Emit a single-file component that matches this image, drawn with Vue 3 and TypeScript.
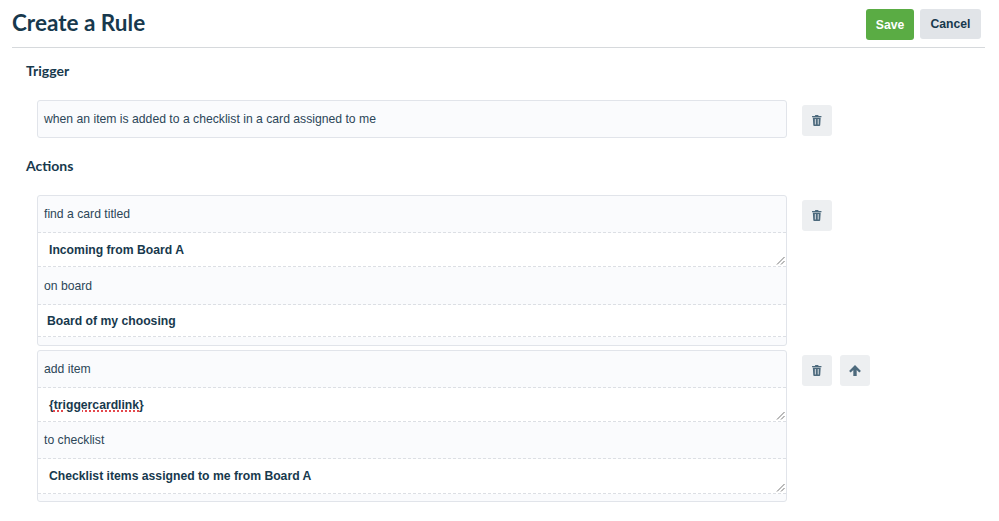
<script setup lang="ts">
interface Row {
  kind: 'label' | 'value'
  text?: string
  parts?: { text: string; misspelled?: boolean }[]
  height: number
  indent?: number
  handle?: boolean
}
interface Action {
  rows: Row[]
  tail: number
  canMoveUp: boolean
}

const actions: Action[] = [
  {
    canMoveUp: false,
    tail: 8,
    rows: [
      { kind: 'label', text: 'find a card titled', height: 37 },
      { kind: 'value', text: 'Incoming from Board A', height: 34, indent: 11, handle: true },
      { kind: 'label', text: 'on board', height: 38 },
      { kind: 'value', text: 'Board of my choosing', height: 32, indent: 9 },
    ],
  },
  {
    canMoveUp: true,
    tail: 7,
    rows: [
      { kind: 'label', text: 'add item', height: 37 },
      { kind: 'value', parts: [{ text: '{' }, { text: 'triggercardlink', misspelled: true }, { text: '}' }], height: 34, indent: 11, handle: true },
      { kind: 'label', text: 'to checklist', height: 37 },
      { kind: 'value', text: 'Checklist items assigned to me from Board A', height: 35, indent: 11, handle: true },
    ],
  },
]
</script>

<template>
  <div class="page">
    <header class="header">
      <h1 class="title">Create a Rule</h1>
      <div class="header-actions">
        <button class="btn save" type="button">Save</button>
        <button class="btn cancel" type="button">Cancel</button>
      </div>
    </header>

    <h2 class="section-title trigger-title">Trigger</h2>
    <div class="rule-line trigger-line">
      <div class="box trigger-box">when an item is added to a checklist in a card assigned to me</div>
      <div class="tools">
        <button class="tool" type="button" aria-label="Delete">
          <svg viewBox="0 0 12 14" width="9.500" height="11"><path fill-rule="evenodd" d="M4.2 0h3.6l.6 1.3H12v1.5H0V1.3h3.6zM1 3.6h10l-.6 9.3c0 .6-.5 1.1-1.1 1.1H2.700c-.6 0-1.100-.5-1.100-1.100zm2.600 1.600v7h1.100v-7zm3.700 0v7h1.100v-7z"/></svg>
        </button>
      </div>
    </div>

    <h2 class="section-title actions-title">Actions</h2>
    <div class="action-list">
      <div v-for="(action, i) in actions" :key="i" class="rule-line">
        <div class="box action-box">
          <div
            v-for="(row, j) in action.rows"
            :key="j"
            class="row"
            :class="row.kind"
            :style="{ height: row.height + 'px', paddingLeft: (row.indent ?? 6) + 'px' }"
          >
            <template v-if="row.parts">
              <span v-for="(p, k) in row.parts" :key="k" :class="{ misspelled: p.misspelled }">{{ p.text }}</span>
            </template>
            <template v-else>{{ row.text }}</template>
            <svg v-if="row.handle" class="handle" viewBox="0 0 9 9" width="9" height="9">
              <path d="M1 8.500 8.500 1M5 8.500 8.500 5" stroke="#777" stroke-width="1" fill="none" />
            </svg>
          </div>
          <div class="tail" :style="{ height: action.tail + 'px' }"></div>
        </div>
        <div class="tools">
          <button class="tool" type="button" aria-label="Delete">
            <svg viewBox="0 0 12 14" width="9.500" height="11"><path fill-rule="evenodd" d="M4.2 0h3.6l.6 1.3H12v1.5H0V1.3h3.6zM1 3.6h10l-.6 9.3c0 .6-.5 1.1-1.1 1.1H2.700c-.6 0-1.100-.5-1.100-1.100zm2.600 1.600v7h1.100v-7zm3.700 0v7h1.100v-7z"/></svg>
          </button>
          <button v-if="action.canMoveUp" class="tool" type="button" aria-label="Move up">
            <svg viewBox="0 0 14 13" width="12" height="11"><path d="M7 0 14 7l-1.900 1.800L9 5.800V13H5V5.800L1.900 8.800 0 7z"/></svg>
          </button>
        </div>
      </div>
    </div>
  </div>
</template>

<style scoped>
.page {
  width: 999px;
  height: 521px;
  overflow: hidden;
  box-sizing: border-box;
  padding: 0 14px 0 12px;
  background: #fff;
  color: #17394d;
  font-family: "Liberation Sans", Arial, sans-serif;
}
.header {
  display: flex;
  justify-content: space-between;
  height: 47px;
  box-sizing: content-box;
  border-bottom: 1px solid #d6d9dc;
}
.title {
  margin: 8px 0 0;
  font: 700 22.5px/30px Lato, sans-serif;
  color: #17394d;
}
.header-actions {
  display: flex;
  gap: 6px;
  align-items: flex-start;
  padding: 9px 4px 0 0;
}
.btn {
  border: 0;
  border-radius: 3px;
  font: 700 12.2px "Liberation Sans", Arial, sans-serif;
  padding: 0;
}
.save {
  width: 48px;
  height: 31px;
  background: #5aac44;
  color: #fff;
}
.cancel {
  width: 61px;
  height: 30px;
  background: #e1e4e8;
  color: #17394d;
}
.section-title {
  margin: 0 0 0 14px;
  font: 700 14px/18px Lato, sans-serif;
  color: #17394d;
}
.trigger-title {
  margin-top: 14px;
}
.trigger-line {
  margin-top: 20px;
}
.actions-title {
  margin-top: 19px;
}
.action-list {
  display: flex;
  flex-direction: column;
  gap: 4px;
  margin-top: 20px;
}
.rule-line {
  display: flex;
  align-items: flex-start;
  margin-left: 25px;
}
.box {
  box-sizing: border-box;
  width: 750px;
  border: 1px solid #e1e4ea;
  border-radius: 3px;
  background: #fafbfd;
  font-size: 12.2px;
  color: #2c4658;
}
.trigger-box {
  height: 38px;
  padding-left: 6px;
  line-height: 36px;
}
.action-box {
  overflow: hidden;
}
.row {
  position: relative;
  display: flex;
  align-items: center;
  white-space: pre;
  box-sizing: border-box;
  border-bottom: 1px dashed #dcdfe4;
}
.value {
  background: #fff;
  font-weight: 700;
  color: #17394d;
}
.misspelled {
  text-decoration: underline dotted #e5484d 2px;
  text-underline-offset: 2px;
}
.handle {
  position: absolute;
  right: 1px;
  bottom: 1px;
}
.tools {
  display: flex;
  gap: 8px;
  margin: 5px 0 0 15px;
}
.tool {
  display: flex;
  align-items: center;
  justify-content: center;
  width: 30px;
  height: 31px;
  padding: 0;
  border: 0;
  border-radius: 3px;
  background: #edeff1;
  fill: #4d6a7d;
}
</style>
